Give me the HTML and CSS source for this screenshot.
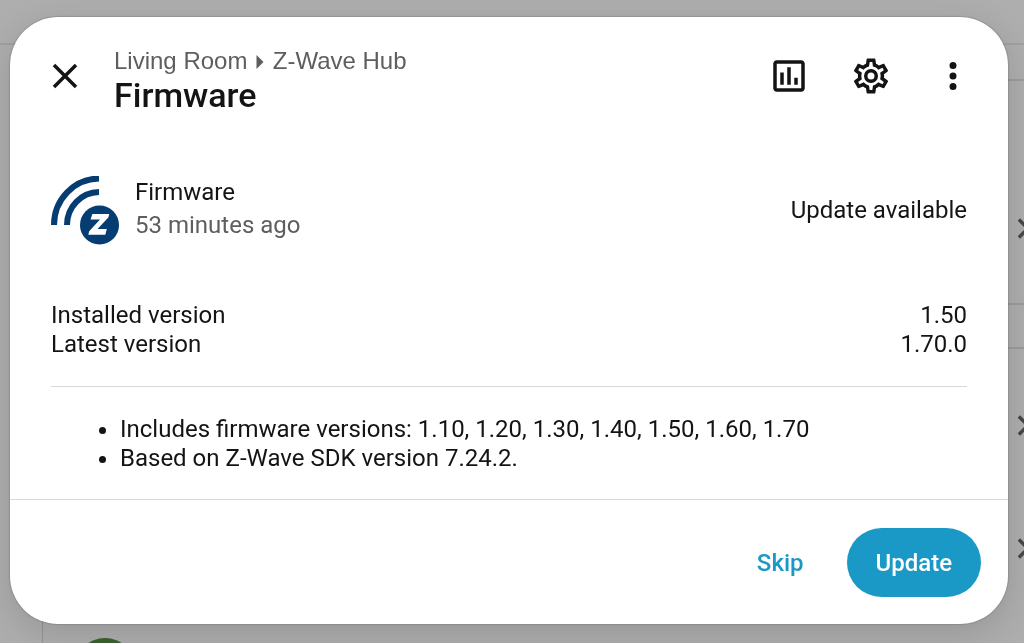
FILE: index.html
```
<!DOCTYPE html>
<html lang="en">
<head>
<meta charset="utf-8">
<title>Firmware</title>
<link rel="stylesheet" href="styles.css">
</head>
<body>

<div class="page" aria-hidden="true">
  <div class="toolbar"></div>
  <div class="panel first"></div>
  <div class="panel row tall"><svg class="chevron" viewBox="0 0 24 24"><path d="M8.59,16.58L13.17,12L8.59,7.41L10,6L16,12L10,18L8.59,16.58Z"/></svg></div>
  <div class="panel"></div>
  <div class="panel row"><svg class="chevron" viewBox="0 0 24 24"><path d="M8.59,16.58L13.17,12L8.59,7.41L10,6L16,12L10,18L8.59,16.58Z"/></svg></div>
  <div class="row"><svg class="chevron" viewBox="0 0 24 24"><path d="M8.59,16.58L13.17,12L8.59,7.41L10,6L16,12L10,18L8.59,16.58Z"/></svg></div>
  <div class="column"><span class="avatar"></span></div>
</div>

<div class="overlay">
  <div class="dialog" role="dialog" aria-labelledby="title">
    <header class="header">
      <button class="icon-button" aria-label="Close"><svg class="icon" viewBox="0 0 24 24"><path d="M19,6.41L17.59,5L12,10.59L6.41,5L5,6.41L10.59,12L5,17.59L6.41,19L12,13.41L17.59,19L19,17.59L13.41,12L19,6.41Z"/></svg></button>
      <div class="heading">
        <p class="breadcrumb">Living Room <svg class="arrow" viewBox="0 0 7 14"><path d="M0,0L7,7L0,14Z"/></svg> Z-Wave Hub</p>
        <h1 id="title">Firmware</h1>
      </div>
      <button class="icon-button" aria-label="History"><svg class="icon" viewBox="0 0 24 24"><path d="M9 17H7V10H9V17M13 17H11V7H13V17M17 17H15V13H17V17M19 19H5V5H19V19.1M19 3H5C3.9 3 3 3.9 3 5V19C3 20.1 3.9 21 5 21H19C20.1 21 21 20.1 21 19V5C21 3.9 20.1 3 19 3Z"/></svg></button>
      <button class="icon-button" aria-label="Settings"><svg class="icon" viewBox="0 0 24 24"><path d="M12,8A4,4 0 0,1 16,12A4,4 0 0,1 12,16A4,4 0 0,1 8,12A4,4 0 0,1 12,8M12,10A2,2 0 0,0 10,12A2,2 0 0,0 12,14A2,2 0 0,0 14,12A2,2 0 0,0 12,10M10,22C9.75,22 9.54,21.82 9.5,21.58L9.13,18.93C8.5,18.68 7.96,18.34 7.44,17.94L4.95,18.95C4.73,19.03 4.46,18.95 4.34,18.73L2.34,15.27C2.21,15.05 2.27,14.78 2.46,14.63L4.57,12.97L4.5,12L4.57,11L2.46,9.37C2.27,9.22 2.21,8.95 2.34,8.73L4.34,5.27C4.46,5.05 4.73,4.96 4.95,5.05L7.44,6.05C7.96,5.66 8.5,5.32 9.13,5.07L9.5,2.42C9.54,2.18 9.75,2 10,2H14C14.25,2 14.46,2.18 14.5,2.42L14.87,5.07C15.5,5.32 16.04,5.66 16.56,6.05L19.05,5.05C19.27,4.96 19.54,5.05 19.66,5.27L21.66,8.73C21.79,8.95 21.73,9.22 21.54,9.37L19.43,11L19.5,12L19.43,13L21.54,14.63C21.73,14.78 21.79,15.05 21.66,15.27L19.66,18.73C19.54,18.95 19.27,19.04 19.05,18.95L16.56,17.95C16.04,18.34 15.5,18.68 14.87,18.93L14.5,21.58C14.46,21.82 14.25,22 14,22H10M11.25,4L10.88,6.61C9.68,6.86 8.62,7.5 7.85,8.39L5.44,7.35L4.69,8.65L6.8,10.2C6.4,11.37 6.4,12.64 6.8,13.8L4.68,15.36L5.43,16.66L7.86,15.62C8.63,16.5 9.68,17.14 10.87,17.38L11.24,20H12.76L13.13,17.39C14.32,17.14 15.37,16.5 16.14,15.62L18.57,16.66L19.32,15.36L17.2,13.81C17.6,12.64 17.6,11.37 17.2,10.2L19.31,8.65L18.56,7.35L16.15,8.39C15.38,7.5 14.32,6.86 13.12,6.62L12.75,4H11.25Z"/></svg></button>
      <button class="icon-button" aria-label="More"><svg class="icon" viewBox="0 0 24 24"><path d="M12,16A2,2 0 0,1 14,18A2,2 0 0,1 12,20A2,2 0 0,1 10,18A2,2 0 0,1 12,16M12,10A2,2 0 0,1 14,12A2,2 0 0,1 12,14A2,2 0 0,1 10,12A2,2 0 0,1 12,10M12,4A2,2 0 0,1 14,6A2,2 0 0,1 12,8A2,2 0 0,1 10,6A2,2 0 0,1 12,4Z"/></svg></button>
    </header>

    <div class="content">
      <div class="state">
        <svg class="logo" viewBox="0 0 69 69">
          <path class="wave" d="M3,49A45.5,46.5 0 0,1 48,2.5M16,49A32.5,33 0 0,1 48,16"/>
          <circle cx="48.5" cy="49" r="19.5"/>
          <path class="mark" d="M41.3,38H58.3L57.3,41.5L46.5,53H55.8L54.3,58.7H37.3L38.2,55.2L49,43.5H39.6Z"/>
        </svg>
        <div class="info">
          <div>Firmware</div>
          <div class="secondary">53 minutes ago</div>
        </div>
        <div>Update available</div>
      </div>

      <dl class="versions">
        <dt>Installed version</dt><dd>1.50</dd>
        <dt>Latest version</dt><dd>1.70.0</dd>
      </dl>

      <hr>

      <ul class="notes">
        <li>Includes firmware versions: 1.10, 1.20, 1.30, 1.40, 1.50, 1.60, 1.70</li>
        <li>Based on Z-Wave SDK version 7.24.2.</li>
      </ul>
    </div>

    <footer class="footer">
      <button class="button">Skip</button>
      <button class="button primary">Update</button>
    </footer>
  </div>
</div>

</body>
</html>
```
FILE: styles.css
```
* { box-sizing: border-box; }
html, body { height: 100%; }
body {
  margin: 0;
  overflow: hidden;
  background: #aeaeae;
  color: #141414;
  font: 24px/29px Roboto, sans-serif;
}

/* page behind the dialog */
.page { height: 100%; overflow: hidden; }
.toolbar { height: 45px; border-bottom: 2px solid #a0a0a0; }
.panel { height: 44px; margin-left: 42px; border-bottom: 2px solid #9c9c9c; }
.panel.first { height: 36px; }
.row {
  display: flex;
  align-items: center;
  justify-content: flex-end;
  height: 94px;
}
.panel.row { height: 152px; border: 0; }
.panel.tall { height: 224px; border-bottom: 2px solid #9c9c9c; padding-top: 73px; }
.chevron { width: 41px; height: 41px; margin-right: -20px; flex: none; fill: #464646; }
.column { height: 80px; margin-left: 42px; border-left: 1px solid #959595; padding: 43px 0 0 32px; }
.avatar { display: block; width: 60px; height: 60px; border-radius: 50%; background: #3a6330; }

.overlay {
  position: fixed;
  inset: 0;
  padding: 17px 16px 19px 10px;
}
.dialog {
  display: flex;
  flex-direction: column;
  height: 100%;
  border-radius: 48px;
  background: #fff;
  box-shadow: 0 0 2px rgba(0, 0, 0, .4), 0 10px 36px rgba(0, 0, 0, .14);
}

.header { display: flex; align-items: center; padding: 18px 14px; }
.icon-button {
  display: flex;
  align-items: center;
  justify-content: center;
  width: 82px;
  height: 82px;
  padding: 0;
  border: 0;
  background: none;
}
.icon { width: 42px; height: 42px; fill: #141414; }
.heading { flex: 1; padding: 8px 0 0 8px; }
.breadcrumb {
  margin: 0;
  color: #5e5e5e;
  font: 24px/30px "Liberation Sans", sans-serif;
}
.arrow { width: 8px; height: 14px; margin: 0 2px; fill: #5e5e5e; }
h1 { margin: 0; font-size: 34px; line-height: 38px; font-weight: 500; }

.content { flex: 1; padding: 41px 41px 0; }
.state { display: flex; align-items: center; height: 69px; }
.logo { width: 69px; height: 69px; fill: #053c72; }
.wave { fill: none; stroke: #053c72; stroke-width: 6; }
.mark { fill: #fff; }
.info { flex: 1; padding: 0 0 4px 15px; line-height: 33px; }
.secondary { color: #5e5e5e; }

.versions {
  display: grid;
  grid-template-columns: 1fr auto;
  margin: 56px 0 27px;
}
dd { margin: 0; text-align: right; }
hr { margin: 0; border: 0; border-top: 1px solid #d8d8d8; }
.notes { margin: 28px 0 0; padding-left: 69px; }

.footer {
  display: flex;
  justify-content: flex-end;
  gap: 14px;
  padding: 28px 27px 27px;
  border-top: 1px solid #d8d8d8;
}
.button {
  height: 69px;
  padding: 0 29px;
  border: 0;
  border-radius: 35px;
  background: none;
  color: #1b99c6;
  font: 500 24px/28px Roboto, sans-serif;
}
.primary { background: #1b99c6; color: #fff; }
```
